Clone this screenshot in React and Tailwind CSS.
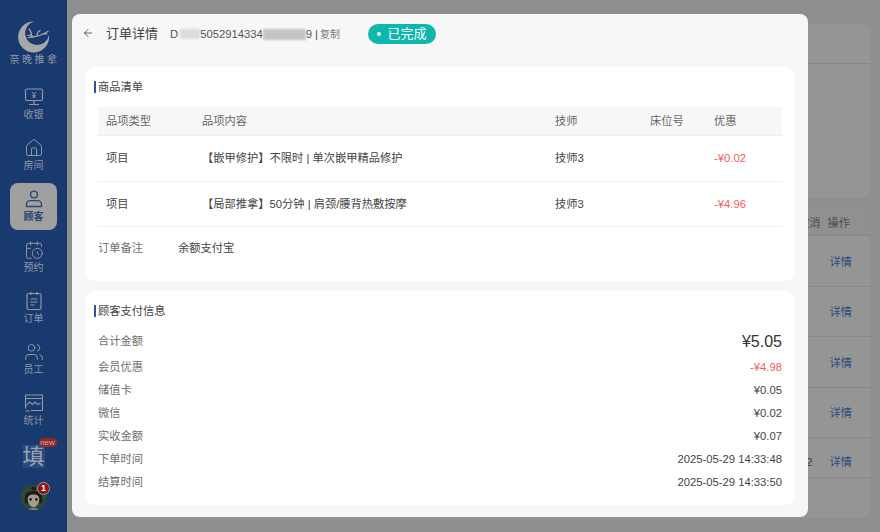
import React from "react";
import { House, Users, CalendarClock, ArrowLeft } from "lucide-react";

const font = "font-['Liberation_Sans','Noto_Sans_CJK_SC',sans-serif]";

const MonitorIcon = ({ className }) => (
  <svg viewBox="0 0 20 20" className={className} fill="none" stroke="currentColor" strokeWidth="1.2">
    <rect x="1.5" y="2" width="17" height="11.5" rx="1.5" />
    <path d="M10 13.5V17M5 17.5h10" />
    <path d="M8 5l2 2.4L12 5M10 7.4V11M8.4 8.6h3.2M8.4 10h3.2" strokeWidth="1" />
  </svg>
);

const UserIcon = ({ className }) => (
  <svg viewBox="0 0 20 20" className={className} fill="none" stroke="currentColor" strokeWidth="1.4">
    <circle cx="10" cy="5.5" r="3.4" />
    <path d="M2.5 17.5v-2.3c0-2 1.6-3.6 3.6-3.6h7.8c2 0 3.6 1.6 3.6 3.6v2.3z" strokeLinejoin="round" />
  </svg>
);

const NoteIcon = ({ className }) => (
  <svg viewBox="0 0 20 20" className={className} fill="none" stroke="currentColor" strokeWidth="1.2">
    <rect x="3" y="2.5" width="14" height="16" rx="1.5" />
    <path d="M7 1v3M13 1v3M6.5 8h7M6.5 11h7M6.5 14h4" />
  </svg>
);

const ChartIcon = ({ className }) => (
  <svg viewBox="0 0 20 20" className={className} fill="none" stroke="currentColor" strokeWidth="1.1">
    <path d="M1.5 15.5V2h17v15.5H7M1.5 5.5h17" />
    <path d="M2 13l3.5-4 3 2.5 2.5-2.5 2.5 2.5 3-1.5" />
    <path d="M1.5 18h4" />
  </svg>
);

const Logo = () => (
  <svg viewBox="17 20 34 34" className="w-[34px] h-[34px]" fill="none">
    <path d="M34 21.500A15.500 15.500 0 1 0 49 35A12 12 0 1 1 34 21.500z" fill="#a8a8a8" />
    <path d="M28 37.500c6 0 13-2 20-6M31 37c1-3 0-6-2-8M37 35.500c0-2 1-4 3-5M42 34c2 0 3 0 5 0M33 36.500c-1-1-3-2-5-1" stroke="#a8a8a8" strokeWidth="1.2" strokeLinecap="round" />
  </svg>
);

const Avatar = () => (
  <svg viewBox="0 0 28 28" className="w-[27px] h-[27px]">
    <circle cx="14" cy="14" r="13.500" fill="#2c4a33" />
    <circle cx="14" cy="5" r="2.500" fill="#1c1c1c" />
    <path d="M10.500 7.500h7" stroke="#a08a3c" strokeWidth="1.200" />
    <path d="M5 15c0-6 4-8 9-8s9 2 9 8v5H5z" fill="#1c1c1c" />
    <path d="M8 16c0-4 3-5 6-5s6 1 6 5-3 8-6 8-6-4-6-8z" fill="#a89a90" />
    <circle cx="11" cy="16" r="1.400" fill="#222" />
    <circle cx="17" cy="16" r="1.400" fill="#222" />
    <path d="M9 27c1-3 9-3 10 0z" fill="#7d7d78" />
  </svg>
);

function NavItem({ icon: Icon, label, active }) {
  return (
    <div className={`flex flex-col items-center justify-center ${active ? "w-[47px] h-[47px] my-[2px] rounded-[8px] bg-[#a0a0a0] text-[#2b4676] font-bold" : "w-[47px] h-[51px] text-[#8f98a9]"}`}>
      <Icon className="w-[20px] h-[20px]" strokeWidth={1.2} />
      <span className="text-[10px] leading-[14px] mt-[1px]">{label}</span>
    </div>
  );
}

function Sidebar() {
  return (
    <div className="w-[67px] shrink-0 h-full bg-[#183a6e] flex flex-col items-center">
      <div className="mt-[20px] flex flex-col items-center">
        <Logo />
        <div className="text-[10px] leading-[14px] tracking-[2.500px] pl-[2px] text-[#8f98a9] -mt-[1px]">奈晚推拿</div>
      </div>
      <div className="mt-[12px] flex flex-col items-center">
        <NavItem icon={MonitorIcon} label="收银" />
        <NavItem icon={House} label="房间" />
        <NavItem icon={UserIcon} label="顾客" active />
        <NavItem icon={CalendarClock} label="预约" />
        <NavItem icon={NoteIcon} label="订单" />
        <NavItem icon={Users} label="员工" />
        <NavItem icon={ChartIcon} label="统计" />
      </div>
      <div className="relative mt-[9px] w-[22px] h-[23px] flex items-center justify-center text-[22px] leading-none text-[#9aa3b5] bg-[#2a4a7c]">
        填
        <span className="absolute -top-[7px] left-[16px] h-[9px] w-[18px] rounded-full bg-[#8f2b2b] text-[#c9a8a8] text-[8px] leading-[9px] text-center">new</span>
      </div>
      <div className="relative mt-[16px]">
        <Avatar />
        <span className="absolute -top-[2px] -right-[3px] w-[13px] h-[13px] rounded-full bg-[#8e1118] border border-[#aa9988] text-white text-[9px] leading-[11px] text-center font-bold">1</span>
      </div>
    </div>
  );
}

function BackRow({ right, className = "h-[50.500px] pt-[3px]" }) {
  return (
    <div className={`flex items-center justify-end pr-[18px] text-[11.250px] border-b border-[#878889] ${className}`}>
      {right ? <span className="text-[#444] mr-[17px]">{right}</span> : null}
      <span className="text-[#2c4a7c]">详情</span>
    </div>
  );
}

function Background() {
  return (
    <div className="flex-1 pt-[24px] pl-[10px] pr-[10px] flex flex-col gap-[10px]">
      <div className="h-[174px] bg-[#959595] rounded-[8px]">
        <div className="h-[40px] border-b border-[#858687]" />
      </div>
      <div className="h-[310px] bg-[#959595] rounded-[8px] overflow-hidden">
        <div className="h-[28px] pt-[3px] bg-[#8f9090] flex items-center justify-end pr-[20px] gap-[7px] text-[11.250px] text-[#4d4d4d] border-b border-[#878889]">
          <span>撤消</span>
          <span>操作</span>
        </div>
        <BackRow />
        <BackRow />
        <BackRow />
        <BackRow />
        <BackRow right="2" className="h-[40px] pt-[10px]" />
      </div>
    </div>
  );
}

const cols = "grid grid-cols-[104px_353px_95px_64px_1fr]";

function ItemRow({ content, off }) {
  return (
    <div className={`${cols} h-[45.500px] pt-[1px] items-center border-b border-[#f0f0f6] text-[#444]`}>
      <span className="pl-[8px]">项目</span>
      <span>{content}</span>
      <span>技师3</span>
      <span />
      <span className="text-[#fa5a5f]">{off}</span>
    </div>
  );
}

const SectionTitle = ({ children }) => (
  <div className="flex items-center h-[14px] text-[#444]">
    <span className="w-[2px] h-[12px] bg-[#2d5394] mr-[2px]" />
    {children}
  </div>
);

function PayRow({ label, value, valueClass = "text-[#444]", className = "h-[23px]" }) {
  return (
    <div className={`flex items-center justify-between ${className}`}>
      <span className="text-[#6f6f6f]">{label}</span>
      <span className={valueClass}>{value}</span>
    </div>
  );
}

function OrderModal() {
  return (
    <div className="absolute left-[72px] top-[14px] w-[736px] h-[503px] bg-[#f7f7f7] rounded-[8px] px-[13px] text-[11.250px]">
      <div className="h-[40px] flex items-center">
        <ArrowLeft className="w-[12px] h-[12px] text-[#333] -mt-[3px] -ml-[3px]" strokeWidth={1.5} />
        <span className="ml-[12px] text-[13px] text-[#444]">订单详情</span>
        <span className="ml-[12px] flex items-center text-[#555]">
          D
          <span className="ml-[2px] w-[20px] h-[10px] bg-[#dcdcdc] blur-[1px]" />
          <span>5052914334</span>
          <span className="w-[43px] h-[11px] bg-[#c4c4c4] blur-[1px]" />
          <span>9</span>
          <span className="ml-[3px]">|</span>
          <span className="ml-[2px] text-[10px] text-[#777]">复制</span>
        </span>
        <span className="ml-[28px] h-[20px] w-[68px] rounded-full bg-[#0cb8ae] text-white text-[13px] flex items-center justify-center gap-[6px]">
          <span className="w-[4px] h-[4px] rounded-full bg-white" />
          已完成
        </span>
      </div>

      <div className="mt-[13px] h-[214px] bg-white rounded-[10px] pl-[9px] pr-[13px] pt-[13px]">
        <SectionTitle>商品清单</SectionTitle>
        <div className="ml-[4px] mt-[13px]">
          <div className={`${cols} h-[29px] items-center bg-[#f7f7f7] border-b border-[#eeeeee] text-[#666]`}>
            <span className="pl-[8px]">品项类型</span>
            <span>品项内容</span>
            <span>技师</span>
            <span>床位号</span>
            <span>优惠</span>
          </div>
          <ItemRow content="【嵌甲修护】不限时 | 单次嵌甲精品修护" off="-¥0.02" />
          <ItemRow content="【局部推拿】50分钟 | 肩颈/腰背热敷按摩" off="-¥4.96" />
          <div className="flex items-center h-[43px]">
            <span className="w-[80px] text-[#6f6f6f]">订单备注</span>
            <span className="text-[#444]">余额支付宝</span>
          </div>
        </div>
      </div>

      <div className="mt-[10px] h-[214px] bg-white rounded-[10px] pl-[9px] pr-[13px] pt-[13px]">
        <SectionTitle>顾客支付信息</SectionTitle>
        <div className="ml-[4px] mt-[10px]">
          <PayRow label="合计金额" value="¥5.05" valueClass="text-[16px] text-[#333]" className="h-[27px]" />
          <PayRow label="会员优惠" value="-¥4.98" valueClass="text-[#fa5a5f]" className="h-[24px]" />
          <PayRow label="储值卡" value="¥0.05" />
          <PayRow label="微信" value="¥0.02" />
          <PayRow label="实收金额" value="¥0.07" />
          <PayRow label="下单时间" value="2025-05-29 14:33:48" />
          <PayRow label="结算时间" value="2025-05-29 14:33:50" />
        </div>
      </div>
    </div>
  );
}

export default function App() {
  return (
    <div className={`relative w-[880px] h-[532px] overflow-hidden flex bg-[#8e8f90] ${font}`}>
      <Sidebar />
      <Background />
      <OrderModal />
    </div>
  );
}
